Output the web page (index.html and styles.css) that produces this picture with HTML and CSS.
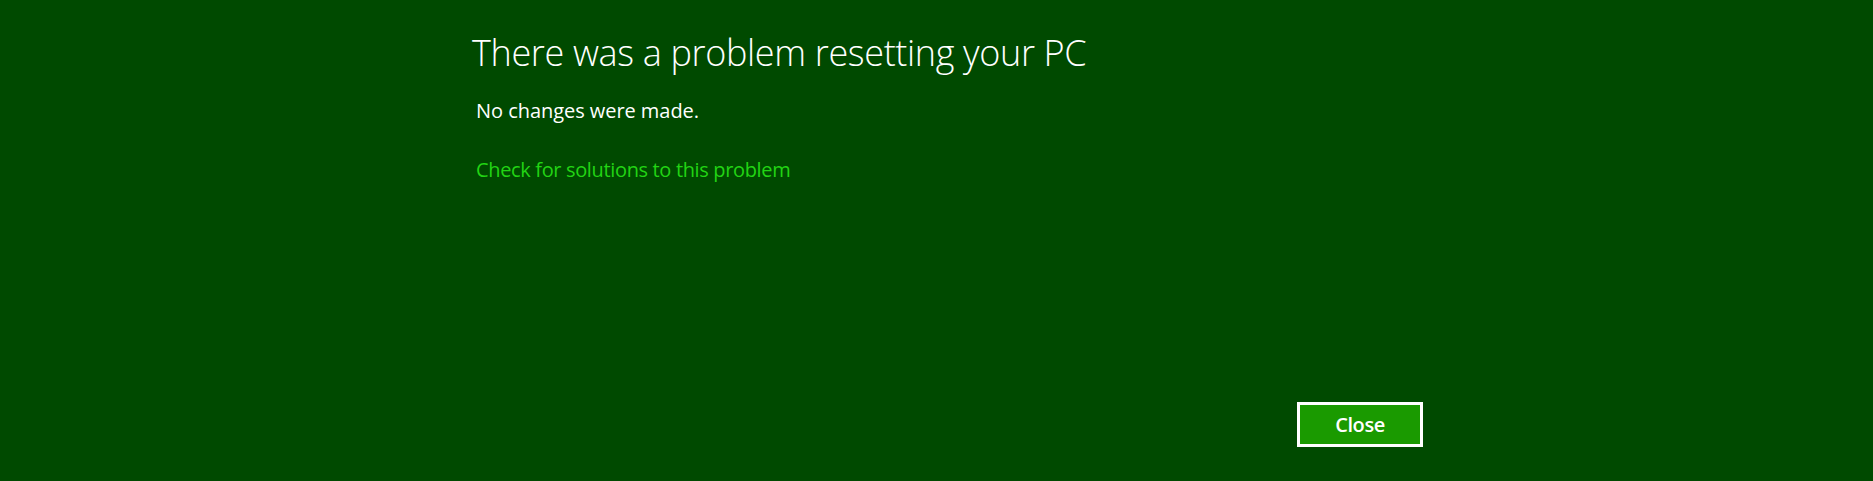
FILE: index.html
```html
<!DOCTYPE html>
<html>
<head>
<meta charset="utf-8">
<link rel="stylesheet" href="styles.css">
</head>
<body>
<div class="page">
  <div class="content">
    <h1 class="title">There was a problem resetting your PC</h1>
    <p class="message">No changes were made.</p>
    <a class="link" href="#">Check for solutions to this problem</a>
  </div>
  <div class="actions">
    <button class="btn">Close</button>
  </div>
</div>
</body>
</html>
```
FILE: styles.css
```css
html, body {
  margin: 0;
  padding: 0;
  background: #004a00;
  height: 100%;
}
body {
  font-family: "Open Sans", "Noto Sans", sans-serif;
  color: #ffffff;
}
.page {
  width: 951px;
  margin-left: 472px;
  height: 481px;
  display: flex;
  flex-direction: column;
}
.content {
  display: flex;
  flex-direction: column;
  align-items: flex-start;
}
.title {
  margin: 28px 0 0 0;
  font-weight: 300;
  font-size: 36px;
  line-height: 50px;
  letter-spacing: -0.35px;
}
.message {
  margin: 20px 0 0 4px;
  font-size: 20px;
  line-height: 26px;
  letter-spacing: -0.05px;
}
.link {
  margin: 33px 0 0 4px;
  font-size: 20px;
  line-height: 26px;
  letter-spacing: -0.35px;
  color: #22d414;
  text-decoration: none;
}
.actions {
  display: flex;
  justify-content: flex-end;
  margin-top: auto;
  margin-bottom: 34px;
}
.btn {
  width: 126px;
  height: 45px;
  box-sizing: border-box;
  border: 3px solid #ffffff;
  background: #1a9a00;
  color: #ffffff;
  font-family: "Open Sans", "Noto Sans", sans-serif;
  font-weight: 600;
  font-size: 20px;
  letter-spacing: -0.4px;
  padding: 0;
}
```
